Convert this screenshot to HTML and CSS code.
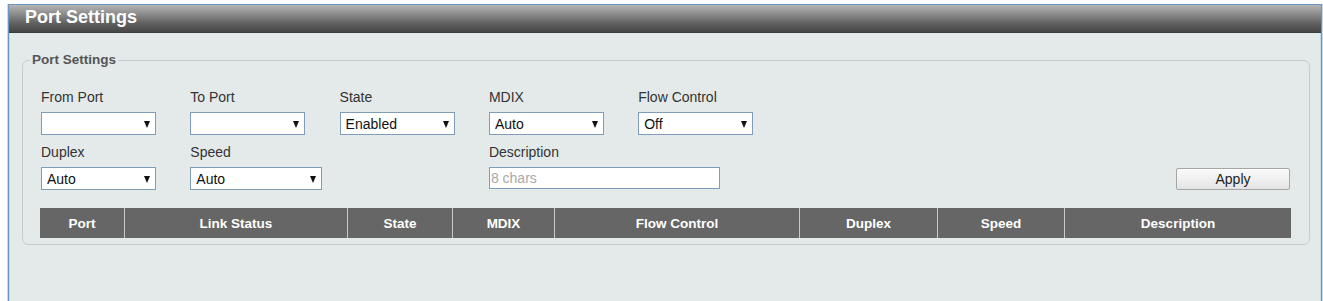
FILE: index.html
```html
<!DOCTYPE html>
<html>
<head>
<meta charset="utf-8">
<title>Port Settings</title>
<link rel="stylesheet" href="styles.css">
</head>
<body>
<div class="frame">
  <div class="titlebar">Port Settings</div>
  <fieldset class="group">
    <legend>Port Settings</legend>
    <div class="inner">
      <div class="form">
        <div class="field"><label>From Port</label><div class="sel"><select><option></option></select></div></div>
        <div class="field"><label>To Port</label><div class="sel"><select><option></option></select></div></div>
        <div class="field"><label>State</label><div class="sel"><select><option>Enabled</option></select></div></div>
        <div class="field"><label>MDIX</label><div class="sel"><select><option>Auto</option></select></div></div>
        <div class="field"><label>Flow Control</label><div class="sel"><select><option>Off</option></select></div></div>
        <div class="spacer"></div>

        <div class="field"><label>Duplex</label><div class="sel"><select><option>Auto</option></select></div></div>
        <div class="field"><label>Speed</label><div class="sel wide"><select><option>Auto</option></select></div></div>
        <div class="field"></div>
        <div class="field desc"><label>Description</label><input type="text" placeholder="8 chars"></div>
        <div class="action"><button type="button">Apply</button></div>
      </div>
      <table class="grid">
        <thead>
          <tr>
            <th class="c-port">Port</th>
            <th class="c-link">Link Status</th>
            <th class="c-state">State</th>
            <th class="c-mdix">MDIX</th>
            <th class="c-flow">Flow Control</th>
            <th class="c-duplex">Duplex</th>
            <th class="c-speed">Speed</th>
            <th class="c-desc">Description</th>
          </tr>
        </thead>
      </table>
    </div>
  </fieldset>
</div>
</body>
</html>
```

FILE: styles.css
```css
html, body {
  margin: 0;
  padding: 0;
  background: #ffffff;
}

body {
  font-family: "Liberation Sans", Arial, sans-serif;
  color: #333333;
}

.frame {
  margin: 4px 1px 0 8px;
  height: 297px;
  box-sizing: border-box;
  background: #e3eae9;
  border: 1px solid #6b95bb;
  border-bottom: none;
  box-shadow: inset 1px 0 #c4dbea, inset -1px 0 #c4dbea, -1px 0 #c4dbea, 1px 0 #c4dbea;
}

.titlebar {
  height: 28px;
  box-sizing: border-box;
  padding: 0 0 0 16px;
  background: linear-gradient(to bottom, #b4b4b4 0%, #8a8a8a 35%, #5e5e5e 70%, #474747 100%);
  color: #ffffff;
  font-weight: bold;
  font-size: 18px;
  line-height: 25px;
  border-bottom: 1px solid #3c3c3c;
}

.group {
  margin: 19px 11px 0 13px;
  padding: 0;
  border: 1px solid #c6cccb;
  border-radius: 6px;
  min-width: 0;
}

.group legend {
  margin-left: 7px;
  padding: 0 2px;
  font-size: 13.5px;
  font-weight: bold;
  line-height: 16px;
  color: #555555;
}

.inner {
  padding: 21px 18px 6px 17px;
}

.form {
  display: grid;
  grid-template-columns: repeat(5, 149.3px) 1fr;
  row-gap: 9px;
  margin-left: 1px;
}

.field label {
  display: block;
  font-size: 14px;
  line-height: 17px;
  height: 17px;
  margin-bottom: 6px;
  color: #333333;
}

.sel {
  position: relative;
  width: 115px;
  height: 23px;
}

.sel.wide {
  width: 132px;
}

.sel select {
  appearance: none;
  -webkit-appearance: none;
  width: 100%;
  height: 23px;
  margin: 0;
  padding: 1px 0 0 5px;
  box-sizing: border-box;
  border: 1px solid #7f9db9;
  border-radius: 0;
  background: #ffffff;
  font-family: "Liberation Sans", Arial, sans-serif;
  font-size: 14px;
  color: #111111;
  outline: none;
}

.sel::after {
  content: "";
  position: absolute;
  right: 6px;
  top: 9px;
  width: 0;
  height: 0;
  border-left: 3.5px solid transparent;
  border-right: 3.5px solid transparent;
  border-top: 7px solid #111111;
  pointer-events: none;
}

.desc {
  grid-column: 4 / span 2;
}

.desc input {
  display: block;
  width: 231px;
  height: 22px;
  box-sizing: border-box;
  margin: 0;
  padding: 0 0 0 1px;
  border: 1px solid #7f9db9;
  background: #ffffff;
  font-family: "Liberation Sans", Arial, sans-serif;
  font-size: 14px;
  outline: none;
}

.desc input::placeholder {
  color: #a9a9a9;
}

.action {
  display: flex;
  justify-content: flex-end;
  align-items: flex-end;
}

.action button {
  width: 114px;
  height: 22px;
  margin: 0 1px 0 0;
  padding: 0;
  box-sizing: border-box;
  border: 1px solid #a6a6a6;
  border-radius: 2px;
  background: linear-gradient(to bottom, #fbfbfb 0%, #f0f0f0 50%, #e3e3e3 100%);
  font-family: "Liberation Sans", Arial, sans-serif;
  font-size: 14px;
  color: #222222;
}

.grid {
  width: 100%;
  margin-top: 18px;
  border-collapse: collapse;
  table-layout: fixed;
}

.grid th {
  height: 30px;
  padding: 0;
  background: #666666;
  color: #ffffff;
  font-size: 13.5px;
  font-weight: bold;
  text-align: center;
  border-left: 1px solid #c9c9c9;
}

.grid th:first-child {
  border-left: none;
}

.c-port { width: 84px; }
.c-link { width: 222px; }
.c-state { width: 104px; }
.c-mdix { width: 101px; }
.c-flow { width: 244px; }
.c-duplex { width: 137px; }
.c-speed { width: 126px; }
.c-desc { width: auto; }
```
